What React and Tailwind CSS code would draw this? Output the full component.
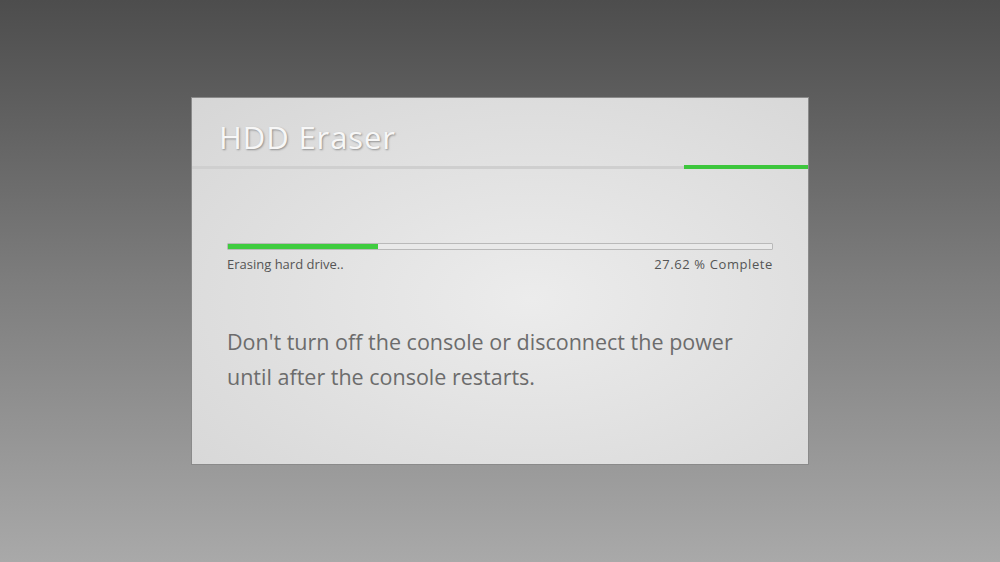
export default function App() {
  return (
    <div
      className="w-[1000px] h-[562px] flex flex-col items-center pt-[97px] bg-gradient-to-b from-[#4d4d4d] via-[#7d7d7d] to-[#a9a9a9]"
      style={{ fontFamily: '"Open Sans", "Noto Sans", sans-serif' }}
    >
      <div className="w-[618px] h-[368px] border border-[#8a8a8a] bg-[radial-gradient(ellipse_at_55%_55%,#ececec_0%,#e2e2e2_45%,#d6d6d6_100%)] flex flex-col">
        {/* header */}
        <div className="h-[67px] flex items-center pl-[27px] pt-[11px]">
          <h1 className="text-[31px] leading-none text-[#f7f7f7] tracking-[0.9px] [text-shadow:1px_1px_2px_rgba(0,0,0,0.35)]">
            HDD Eraser
          </h1>
        </div>
        <div className="flex items-center h-[4px]">
          <div className="flex-1 h-[3px] bg-[#cfcfcf]" />
          <div className="w-[124px] h-[4px] bg-[#3cc63c]" />
        </div>

        {/* body */}
        <div className="px-[35px] pt-[74px]">
          <div className="h-[7px] border border-[#b9b9b9] rounded-[1px] bg-[#e9e9e9] flex">
            <div className="w-[27.62%] h-full bg-[#3fcc3f]" />
          </div>
          <div className="flex justify-between mt-[6px] text-[13px] leading-[16px] text-[#555555]">
            <span>Erasing hard drive..</span>
            <span className="tracking-[0.6px]">27.62 % Complete</span>
          </div>
          <p className="mt-[52px] text-[21.5px] leading-[35px] text-[#6c6c6c]">
            Don't turn off the console or disconnect the power
            <br />
            until after the console restarts.
          </p>
        </div>
      </div>
    </div>
  );
}
